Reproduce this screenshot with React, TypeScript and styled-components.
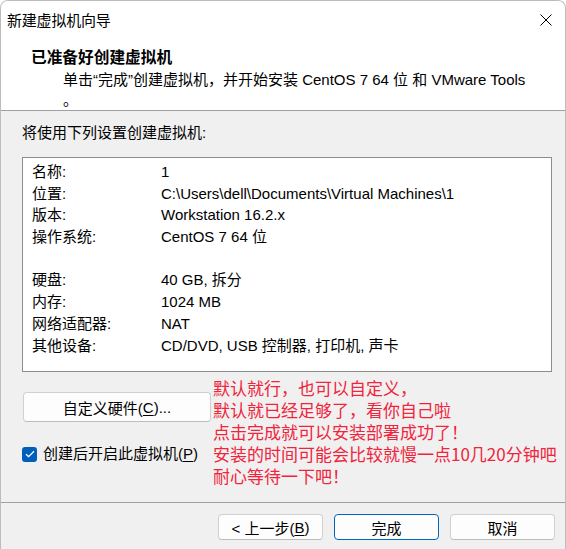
import React from "react";
import styled, { createGlobalStyle } from "styled-components";

const GlobalStyle = createGlobalStyle`
  html, body { margin: 0; padding: 0; background: #ffffff; }
  body { font-family: "Liberation Sans", "Noto Sans CJK SC", sans-serif; }
  * { box-sizing: border-box; }
`;

const Window = styled.div`
  width: 566px;
  height: 549px;
  display: flex;
  flex-direction: column;
  background: #f0f0f0;
  border: 1px solid #bcbcbc;
  border-bottom: none;
  border-radius: 8px 8px 0 0;
  overflow: hidden;
  font-size: 15px;
  color: #000;
`;

const TitleBar = styled.div`
  height: 37px;
  flex: none;
  background: #fff;
  display: flex;
  align-items: center;
  justify-content: space-between;
  padding: 0 13px 0 6px;
`;

const TitleText = styled.div`
  font-size: 15px;
  line-height: 20px;
  font-family: "Noto Sans CJK SC", sans-serif;
  letter-spacing: -0.2px;
`;

const CloseIcon = styled.svg`
  width: 12px;
  height: 12px;
  display: block;
`;

const Header = styled.div`
  flex: none;
  background: #fff;
  border-bottom: 1px solid #a0a0a0;
  padding: 9px 0 0 30px;
  height: 73px;
`;

const HeaderTitle = styled.div`
  font-weight: bold;
  font-size: 15.7px;
  line-height: 20px;
  font-family: "Noto Sans CJK SC", sans-serif;
`;

const HeaderDesc = styled.div`
  margin: 3px 0 0 32px;
  line-height: 20px;
  white-space: nowrap;
`;

const Body = styled.div`
  flex: none;
  padding: 12px 13px 0 21px;
`;

const SectionLabel = styled.div`
  line-height: 20px;
`;

const ListBox = styled.div`
  margin-top: 14px;
  height: 215px;
  background: #fff;
  border: 1px solid #8c8c8c;
  padding: 3px 0 0 9px;
`;

const Row = styled.div`
  display: grid;
  grid-template-columns: 129px 1fr;
  height: 21.7px;
  line-height: 21.7px;
  white-space: nowrap;
`;

const Lower = styled.div`
  height: 130px;
  display: grid;
  grid-template-columns: 191px 1fr;
`;

const LeftCol = styled.div`
  display: flex;
  flex-direction: column;
  align-items: flex-start;
`;

const PushButton = styled.button<{ $primary?: boolean }>`
  font: inherit;
  font-size: 15px;
  color: #000;
  background: #fdfdfd;
  border: 1px solid ${(p) => (p.$primary ? "#0067c0" : "#d0d0d0")};
  border-bottom-color: ${(p) => (p.$primary ? "#0067c0" : "#bdbdbd")};
  border-radius: 4px;
  padding: 0;
  display: flex;
  align-items: center;
  justify-content: center;
  white-space: nowrap;
`;

const HardwareButton = styled(PushButton)`
  margin: 20px 0 0 1px;
  width: 188px;
  height: 30px;
`;

const CheckRow = styled.label`
  margin-top: 22px;
  display: flex;
  align-items: center;
  gap: 6px;
  line-height: 20px;
  white-space: nowrap;
`;

const CheckBox = styled.span`
  width: 15px;
  height: 15px;
  border-radius: 3px;
  background: #005fb8;
  display: flex;
  align-items: center;
  justify-content: center;
`;

const Note = styled.div`
  margin-top: 5px;
  font-family: "Noto Sans CJK SC", sans-serif;
  font-size: 17px;
  line-height: 22px;
  color: #f0243c;
  white-space: nowrap;
`;

const Footer = styled.div`
  flex: none;
  border-top: 1px solid #a0a0a0;
  padding: 11px 10px 0 0;
  display: flex;
  justify-content: flex-end;
  gap: 11px;
`;

const FooterButton = styled(PushButton)`
  width: 105px;
  height: 26px;
`;

const Key = styled.u`
  text-decoration: underline;
  text-underline-offset: 2px;
  text-decoration-thickness: 1px;
`;

const rows: [string, string][] = [
  ["名称:", "1"],
  ["位置:", "C:\\Users\\dell\\Documents\\Virtual Machines\\1"],
  ["版本:", "Workstation 16.2.x"],
  ["操作系统:", "CentOS 7 64 位"],
  ["", ""],
  ["硬盘:", "40 GB, 拆分"],
  ["内存:", "1024 MB"],
  ["网络适配器:", "NAT"],
  ["其他设备:", "CD/DVD, USB 控制器, 打印机, 声卡"],
];

const notes = [
  "默认就行，也可以自定义，",
  "默认就已经足够了，看你自己啦",
  "点击完成就可以安装部署成功了！",
  "安装的时间可能会比较就慢一点10几20分钟吧",
  "耐心等待一下吧！",
];

export default function App() {
  return (
    <>
      <GlobalStyle />
      <Window>
        <TitleBar>
          <TitleText>新建虚拟机向导</TitleText>
          <CloseIcon viewBox="0 0 12 12">
            <path d="M0.5 0.5 L11.5 11.5 M11.5 0.5 L0.5 11.5" stroke="#000" strokeWidth="1" fill="none" />
          </CloseIcon>
        </TitleBar>
        <Header>
          <HeaderTitle>已准备好创建虚拟机</HeaderTitle>
          <HeaderDesc>
            单击“完成”创建虚拟机，并开始安装 CentOS 7 64 位 和 VMware Tools
            <br />。
          </HeaderDesc>
        </Header>
        <Body>
          <SectionLabel>将使用下列设置创建虚拟机:</SectionLabel>
          <ListBox>
            {rows.map(([k, v], i) => (
              <Row key={i}>
                <span>{k}</span>
                <span>{v}</span>
              </Row>
            ))}
          </ListBox>
          <Lower>
            <LeftCol>
              <HardwareButton>
                自定义硬件(<Key>C</Key>)...
              </HardwareButton>
              <CheckRow>
                <CheckBox>
                  <svg width="10" height="8" viewBox="0 0 10 8">
                    <path d="M1 4.2 L3.6 6.6 L9 1.2" stroke="#fff" strokeWidth="1.3" fill="none" />
                  </svg>
                </CheckBox>
                <span>
                  创建后开启此虚拟机(<Key>P</Key>)
                </span>
              </CheckRow>
            </LeftCol>
            <Note>
              {notes.map((n, i) => (
                <div key={i}>{n}</div>
              ))}
            </Note>
          </Lower>
        </Body>
        <Footer>
          <FooterButton>
            &lt; 上一步(<Key>B</Key>)
          </FooterButton>
          <FooterButton $primary>完成</FooterButton>
          <FooterButton>取消</FooterButton>
        </Footer>
      </Window>
    </>
  );
}
